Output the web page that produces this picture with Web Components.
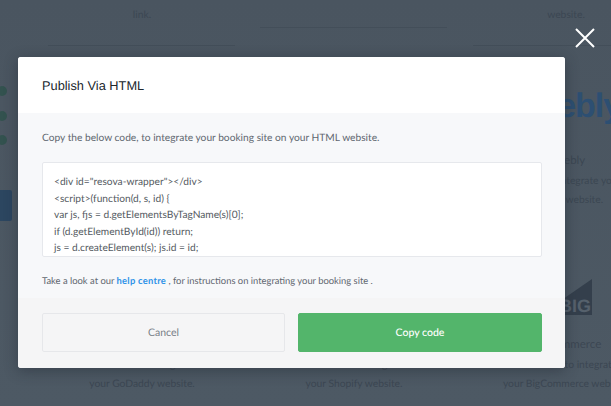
<!DOCTYPE html>
<html lang="en">
<head>
<meta charset="utf-8">
<title>Publish Via HTML</title>
<style>
  html, body { margin: 0; height: 100%; }
  body { font-family: Lato, "Open Sans", sans-serif; overflow: hidden; text-rendering: geometricPrecision; }
  a { color: #2f93e8; font-weight: 700; letter-spacing: 0.25px; text-decoration: none; }
  .weebly { font-size: 34px; line-height: 23px; letter-spacing: -1px; align-self: flex-start; margin-left: 3px; }
</style>
</head>
<body>
<app-page>
  <integration-card slot="cards" class="top" line="left"><span slot="text">link.</span></integration-card>
  <integration-card slot="cards" class="top" line="short"></integration-card>
  <integration-card slot="cards" class="top" line="right"><span slot="text">website.</span></integration-card>

  <integration-card slot="cards" class="mid"></integration-card>
  <integration-card slot="cards" class="mid"></integration-card>
  <integration-card slot="cards" class="mid">
    <span slot="logo" class="weebly">weebly</span>
    <span slot="name">Weebly</span>
    <span slot="text">Publish to integrate your<br>Weebly website.</span>
  </integration-card>

  <integration-card slot="cards" class="low">
    <span slot="name">GoDaddy</span>
    <span slot="text">Learn how to integrate<br>your GoDaddy website.</span>
  </integration-card>
  <integration-card slot="cards" class="low">
    <span slot="name">Shopify</span>
    <span slot="text">Learn how to integrate<br>your Shopify website.</span>
  </integration-card>
  <integration-card slot="cards" class="low">
    <svg slot="logo" width="52" height="37" viewBox="0 0 52 37">
      <polygon points="52,0 52,36 0,36" fill="#343f4c"/>
      <text x="51" y="33" text-anchor="end" font-family="Liberation Sans" font-weight="700" font-size="18" fill="#56616c">BIG</text>
    </svg>
    <span slot="name">BigCommerce</span>
    <span slot="text">Learn how to integrate<br>your BigCommerce website.</span>
  </integration-card>

  <publish-modal slot="overlay">
    <span slot="title">Publish Via HTML</span>
    <span slot="intro">Copy the below code, to integrate your booking site on your HTML website.</span>
    <code-box slot="code"></code-box>
    <span slot="hint">Take a look at our <a href="#">help centre</a> , for instructions on integrating your booking site .</span>
  </publish-modal>
</app-page>

<script>
class AppPage extends HTMLElement {
  connectedCallback() {
    this.attachShadow({ mode: "open" })
    this.shadowRoot.innerHTML = `
      <style>
        :host {
          display: block;
          position: relative;
          width: 611px;
          height: 406px;
          overflow: hidden;
          background: linear-gradient(180deg, #4a5560 0%, #4d5964 100%);
        }
        .layout {
          display: flex;
          height: 100%;
        }
        .side {
          flex: 0 0 36px;
          display: flex;
          flex-direction: column;
          align-items: flex-start;
          padding-top: 86px;
          box-sizing: border-box;
        }
        .dot {
          width: 10px;
          height: 10px;
          margin: 0 0 14.5px -3px;
          border-radius: 50%;
          background: #33524f;
        }
        .side-btn {
          width: 12px;
          height: 31px;
          margin-top: 30px;
          border-radius: 0 2px 2px 0;
          background: #2c4660;
        }
        .cards {
          display: grid;
          grid-template-columns: repeat(3, 212px);
          grid-template-rows: 46px 168px 192px;
          flex: none;
        }
      </style>
      <div class="layout">
        <div class="side">
          <span class="dot"></span>
          <span class="dot"></span>
          <span class="dot"></span>
          <span class="side-btn"></span>
        </div>
        <div class="cards"><slot name="cards"></slot></div>
      </div>
      <slot name="overlay"></slot>
    `
  }
}

class IntegrationCard extends HTMLElement {
  connectedCallback() {
    this.attachShadow({ mode: "open" })
    const line = this.getAttribute("line")
    const row = this.className
    this.shadowRoot.innerHTML = `
      <style>
        :host {
          display: block;
          position: relative;
          color: #3c4753;
          font-size: 10.3px;
          text-align: center;
          font-family: Lato, "Open Sans", sans-serif;
        }
        .body {
          display: flex;
          flex-direction: column;
          align-items: center;
          box-sizing: border-box;
          height: 100%;
          padding: ${row === "top" ? "3px" : row === "mid" ? "49px" : "65px"} 0 0;
        }
        .logo {
          display: flex;
          justify-content: center;
          height: 37px;
          color: #2d4f72;
          font: 700 34px/23px "Liberation Sans", sans-serif;
        }
        .name {
          font-size: 11.5px;
          line-height: 17px;
          margin-top: 20px;
        }
        .text {
          line-height: 19px;
          margin-top: 3px;
          white-space: nowrap;
        }
        .rule {
          position: absolute;
          bottom: 0;
          height: 1px;
          background: #434e59;
        }
        .rule.left { left: 12px; width: 187px; }
        .rule.short { left: 12px; width: 187px; bottom: 18px; }
        .rule.right { left: 13px; width: 187px; }
      </style>
      <div class="body ${row}">
        ${row === "top" ? "" : `<div class="logo"><slot name="logo"></slot></div>`}
        ${row === "top" ? "" : `<div class="name"><slot name="name"></slot></div>`}
        <div class="text"><slot name="text"></slot></div>
      </div>
      ${line ? `<div class="rule ${line}"></div>` : ""}
    `
  }
}

class PublishModal extends HTMLElement {
  connectedCallback() {
    this.attachShadow({ mode: "open" })
    this.shadowRoot.innerHTML = `
      <style>
        :host {
          display: block;
          position: absolute;
          left: 18px;
          top: 57px;
          width: 547px;
          height: 311px;
          font-family: Lato, "Open Sans", sans-serif;
        }
        .dialog {
          display: flex;
          flex-direction: column;
          height: 100%;
          border-radius: 3px;
          overflow: hidden;
          background: #f7f8fa;
          box-shadow: 0 3px 14px rgba(30, 38, 48, 0.45);
        }
        header {
          flex: 0 0 56px;
          display: flex;
          align-items: center;
          padding: 0 24px;
          background: #fff;
          color: #20262c;
          font: 12.8px "Liberation Sans", Arial, sans-serif;
        }
        main {
          flex: 1;
          padding: 17px 23px 0 24px;
          font-size: 10.2px;
          color: #5f6770;
        }
        .intro {
          line-height: 16px;
          margin-bottom: 16px;
        }
        .hint {
          font-size: 9.4px;
          line-height: 16px;
          margin-top: 17px;
        }
        footer {
          flex: 0 0 70px;
          box-sizing: border-box;
          display: grid;
          grid-template-columns: 243px 244px;
          gap: 13px;
          padding: 15px 23px 0 24px;
          background: #f5f5f6;
        }
        footer > * { height: 39px; }
        .close {
          position: absolute;
          left: 557px;
          top: -29px;
          width: 20px;
          height: 20px;
          padding: 0;
          border: 0;
          background: none;
        }
        .close svg { display: block; }
      </style>
      <div class="dialog">
        <header><slot name="title"></slot></header>
        <main>
          <div class="intro"><slot name="intro"></slot></div>
          <slot name="code"></slot>
          <div class="hint"><slot name="hint"></slot></div>
        </main>
        <footer>
          <modal-button>Cancel</modal-button>
          <modal-button variant="primary">Copy code</modal-button>
        </footer>
      </div>
      <button class="close" aria-label="Close">
        <svg width="20" height="20" viewBox="0 0 20 20">
          <path d="M1 1 L19 19 M19 1 L1 19" stroke="#fff" stroke-width="2" fill="none"/>
        </svg>
      </button>
    `
  }
}

class CodeBox extends HTMLElement {
  connectedCallback() {
    this.attachShadow({ mode: "open" })
    this.shadowRoot.innerHTML = `
      <style>
        :host {
          display: block;
          box-sizing: border-box;
          height: 95px;
          padding: 11px 11px 0;
          overflow: hidden;
          background: #fff;
          border: 1px solid #e6e8ec;
          border-radius: 2px;
          color: #555b62;
          font-size: 10.2px;
          line-height: 16.5px;
        }
        pre {
          margin: 0;
          font: inherit;
        }
      </style>
      <pre>&lt;div id="resova-wrapper"&gt;&lt;/div&gt;
&lt;script&gt;(function(d, s, id) {
var js, fjs = d.getElementsByTagName(s)[0];
if (d.getElementById(id)) return;
js = d.createElement(s); js.id = id;</pre>
    `
  }
}

class ModalButton extends HTMLElement {
  connectedCallback() {
    this.attachShadow({ mode: "open" })
    this.shadowRoot.innerHTML = `
      <style>
        :host {
          display: flex;
          align-items: center;
          justify-content: center;
          box-sizing: border-box;
          border: 1px solid #e6e7ea;
          border-radius: 2px;
          background: #f5f5f6;
          color: #787f87;
          font-size: 10.5px;
          cursor: pointer;
        }
        :host([variant="primary"]) {
          border-color: #53b56b;
          background: #53b56b;
          color: #fff;
          font-weight: 500;
        }
      </style>
      <slot></slot>
    `
  }
}

customElements.define("app-page", AppPage)
customElements.define("integration-card", IntegrationCard)
customElements.define("publish-modal", PublishModal)
customElements.define("code-box", CodeBox)
customElements.define("modal-button", ModalButton)
</script>
</body>
</html>
